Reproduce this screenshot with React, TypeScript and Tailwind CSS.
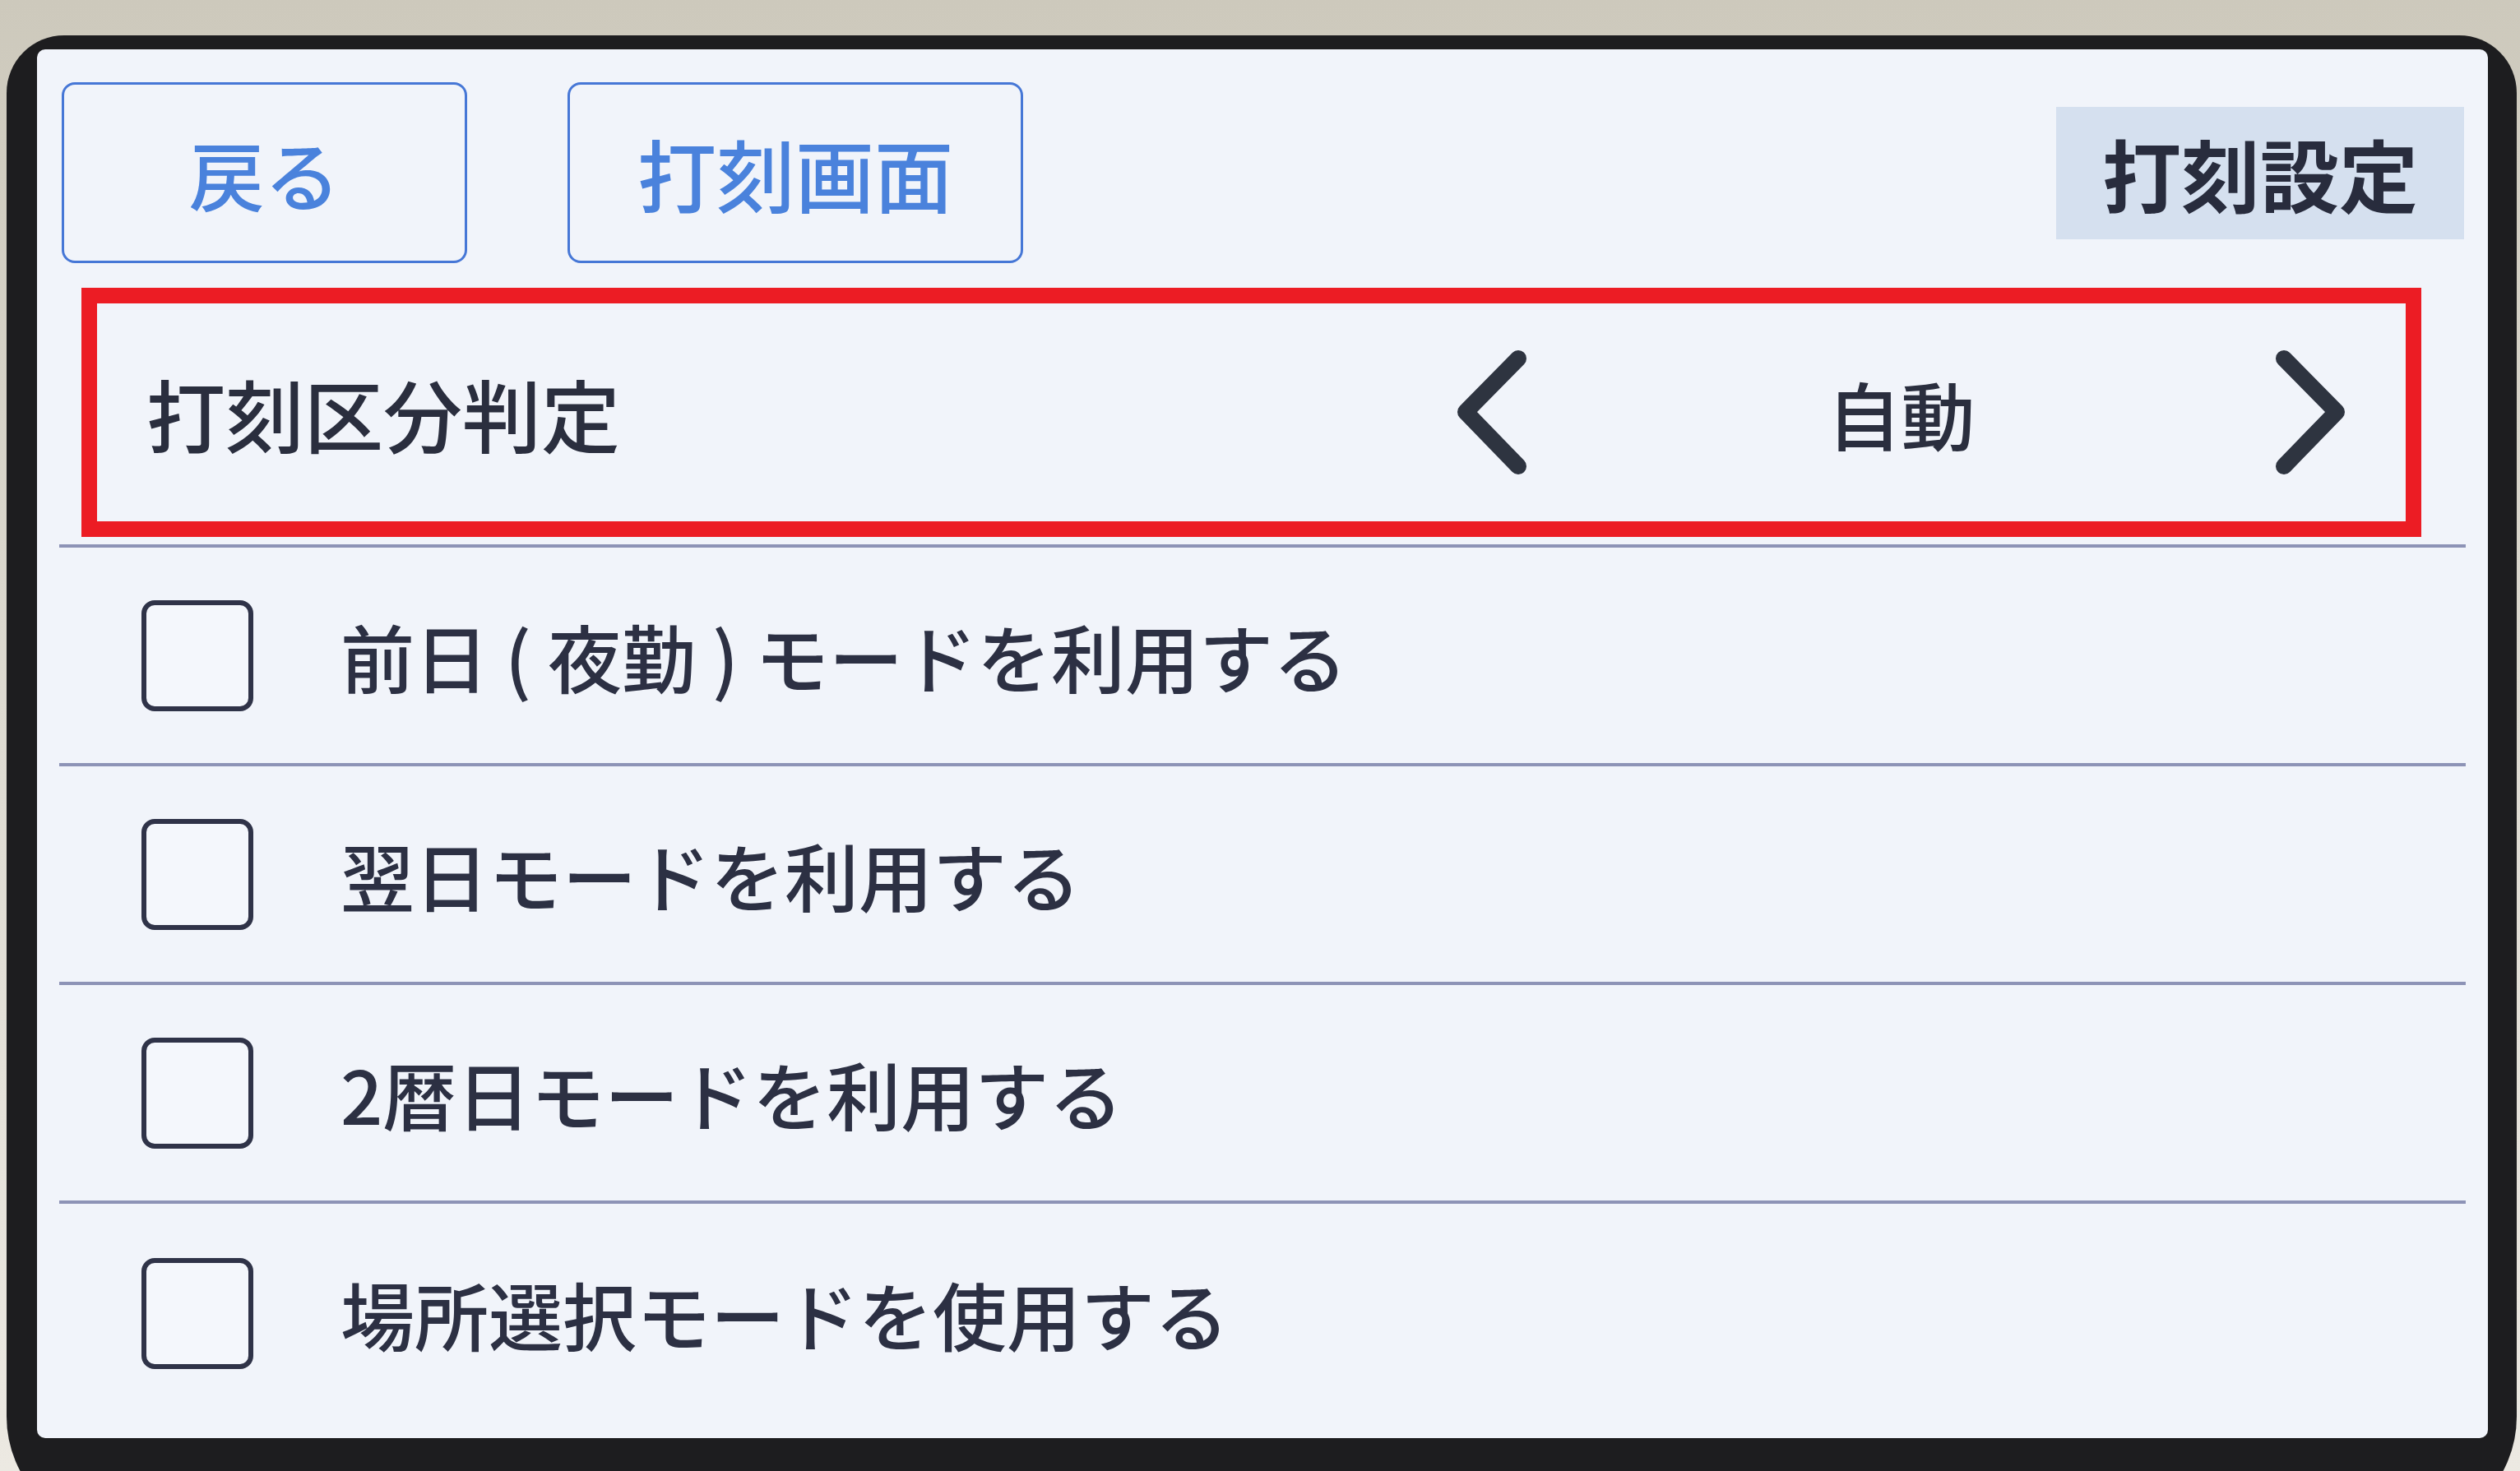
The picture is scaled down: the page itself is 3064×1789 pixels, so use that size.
import React from 'react';

const font = "font-['Noto_Sans_CJK_JP','Noto_Sans',sans-serif]";

const options: React.ReactNode[] = [
  <>
    前日<span className="mx-[20px]">(</span>夜勤<span className="mx-[20px]">)</span>モードを利用する
  </>,
  '翌日モードを利用する',
  '2暦日モードを利用する',
  '場所選択モードを使用する',
];

function Chevron({ dir }: { dir: 'left' | 'right' }) {
  const points = dir === 'left' ? '76,10 12,75 76,141' : '11,10 75,75 11,141';
  return (
    <svg viewBox="0 0 87 151" className="w-[87px] h-[151px] shrink-0">
      <polyline points={points} fill="none" stroke="#2e3440" strokeWidth="20" strokeLinejoin="round" strokeLinecap="round" />
    </svg>
  );
}

function OptionRow({ label, last }: { label: React.ReactNode; last?: boolean }) {
  return (
    <div className={`flex items-center h-[266px] ${last ? '' : 'border-b-4 border-[#8d93b6]'}`}>
      <div className="ml-[100px] w-[136px] h-[135px] shrink-0 rounded-[16px] border-[6px] border-[#2f3348] bg-[#f4f7fc]" />
      <span className="ml-[106px] text-[90px] leading-none font-medium text-[#2c3043] whitespace-nowrap">{label}</span>
    </div>
  );
}

export default function App() {
  return (
    <div className={`w-[3064px] h-[1789px] overflow-hidden bg-gradient-to-b from-[#cdc9bc] via-[#dedbd2] to-[#ece9e2] ${font}`}>
      {/* device bezel */}
      <div className="ml-[8px] mt-[43px] w-[3052px] h-[1820px] rounded-t-[70px] rounded-b-[140px] bg-[#1d1d1f] pt-[17px] pl-[37px]">
        {/* screen */}
        <div className="w-[2980px] h-[1689px] rounded-[10px] bg-[#f1f4fa] flex flex-col">
          {/* top bar */}
          <div className="flex items-center mt-[40px] px-[30px] h-[220px]">
            <button className="w-[493px] h-[220px] rounded-[16px] border-[3px] border-[#4677d6] text-[#4a82dc] text-[92px] font-medium leading-none">
              戻る
            </button>
            <button className="ml-[122px] w-[554px] h-[220px] rounded-[16px] border-[3px] border-[#4677d6] text-[#4a82dc] text-[96px] font-medium leading-none">
              打刻画面
            </button>
            <div className="ml-auto -mr-[1px] w-[496px] h-[161px] bg-[#d5e0ef] flex items-center justify-center text-[96px] font-bold leading-none text-[#282c3d]">
              打刻設定
            </div>
          </div>

          {/* highlighted selector */}
          <div className="mt-[30px] ml-[54px] w-[2845px] h-[303px] border-[19px] border-[#ec1c24] flex items-center">
            <span className="pl-[60px] w-[1652px] shrink-0 text-[96px] font-medium leading-none text-[#2a2e3e]">打刻区分判定</span>
            <Chevron dir="left" />
            <span className="flex-1 text-center text-[90px] font-medium leading-none text-[#2a2e3e]">自動</span>
            <Chevron dir="right" />
            <div className="w-[72px] shrink-0" />
          </div>

          {/* options */}
          <div className="mt-[9px] mx-[27px] border-t-4 border-[#8d93b6]">
            {options.map((o, i) => (
              <OptionRow key={i} label={o} last={i === options.length - 1} />
            ))}
          </div>
        </div>
      </div>
    </div>
  );
}
